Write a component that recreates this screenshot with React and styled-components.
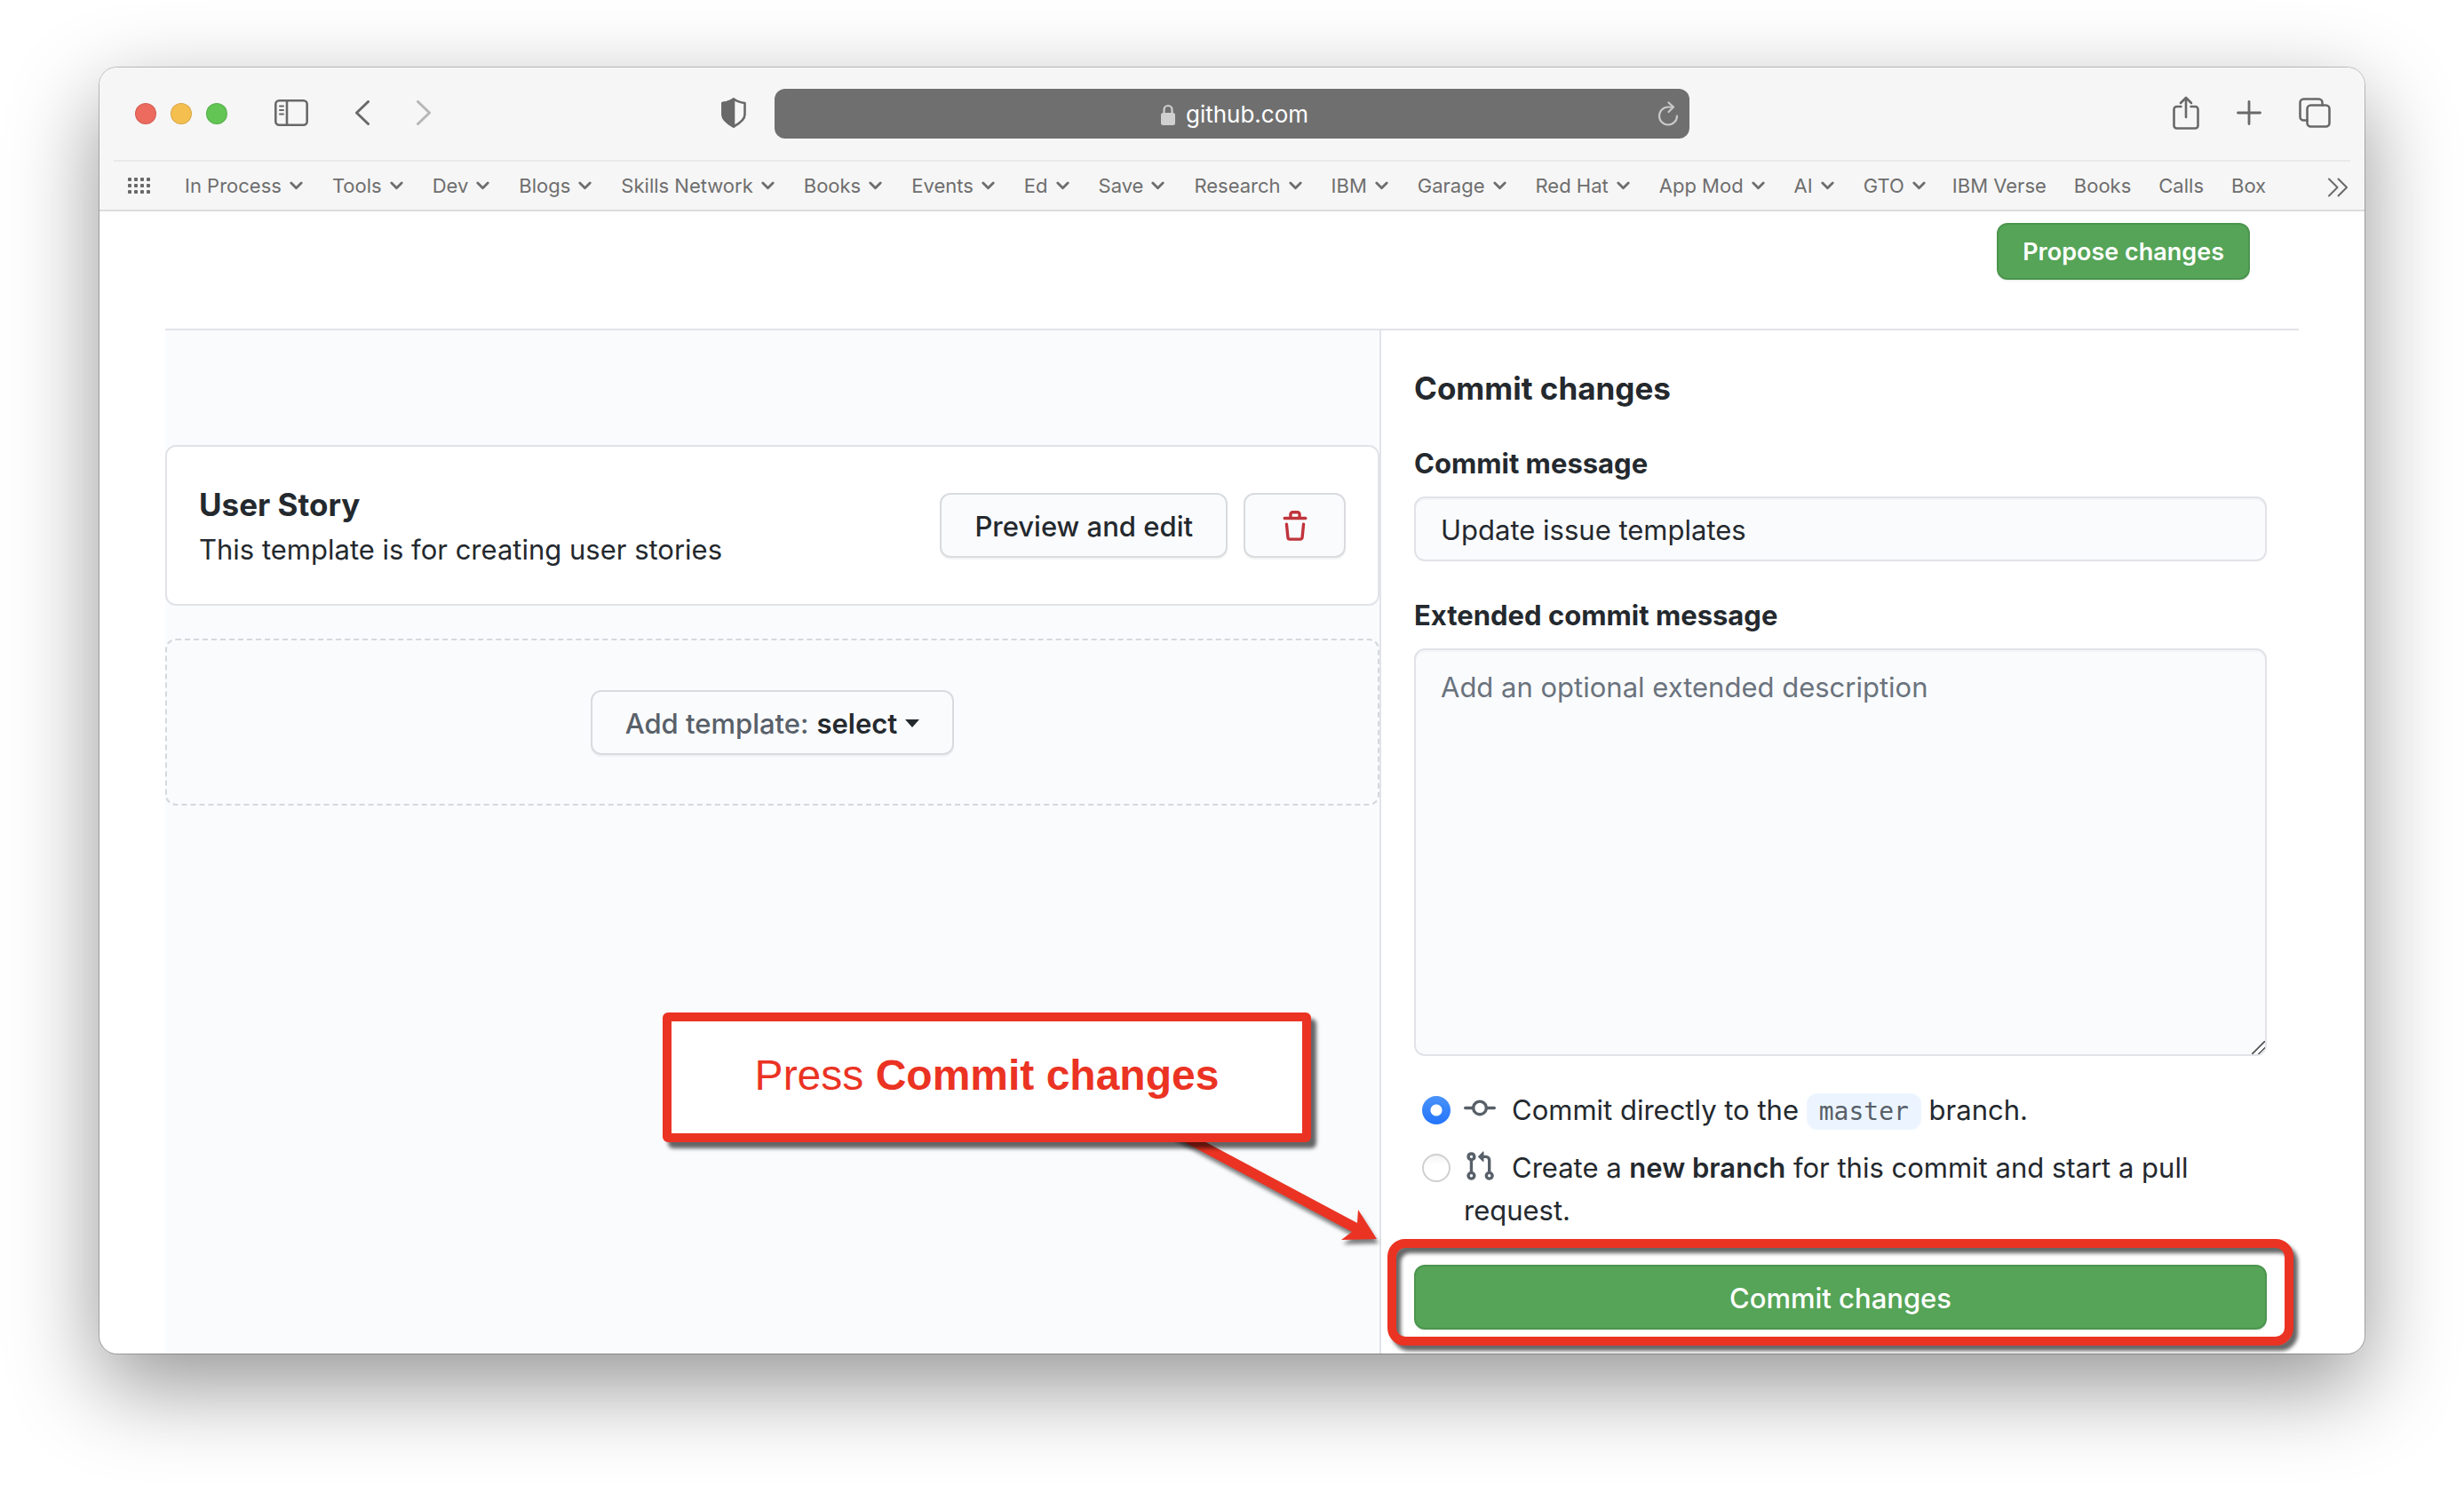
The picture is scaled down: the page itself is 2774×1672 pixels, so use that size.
import React from "react";
import styled, { createGlobalStyle, css } from "styled-components";

const INTER = `Inter, "Open Sans", "Liberation Sans", sans-serif`;

const color = {
  ink: "#24292e",
  inkSoft: "#586069",
  placeholder: "#6a737d",
  line: "#e2e3e8",
  panel: "#fafbfd",
  chrome: "#f6f6f6",
  chromeInk: "#696969",
  green: "#55a457",
  red: "#eb3323",
};

const GlobalStyle = createGlobalStyle`
  *, *::before, *::after { box-sizing: border-box; }
  body { margin: 0; background: #fff; font-family: ${INTER}; color: ${color.ink}; }
  button, input, textarea { font-family: inherit; color: inherit; margin: 0; }
  h2, h3, p { margin: 0; }
  svg { display: block; }
`;

const Desktop = styled.div`
  min-height: 100vh;
  padding: 76px 112px 148px;
  display: flex;
`;

const Window = styled.div`
  flex: 1;
  min-width: 0;
  display: flex;
  flex-direction: column;
  overflow: hidden;
  background: #fff;
  border-radius: 20px;
  box-shadow: 0 0 0 1px rgba(0, 0, 0, 0.22), 0 36px 100px rgba(0, 0, 0, 0.42);
`;

/* ---------- browser chrome ---------- */

const Chrome = styled.div`
  background: ${color.chrome};
  border-bottom: 2px solid #dcdcdc;
`;

const Toolbar = styled.header`
  display: grid;
  grid-template-columns: 1fr minmax(0, 1030px) 1fr;
  align-items: center;
  gap: 32px;
  margin: 0 16px;
  padding: 24px;
  border-bottom: 2px solid #e9e9e9;
`;

const ToolGroup = styled.div`
  display: flex;
  align-items: center;
  gap: ${(p) => p.$gap}px;
  justify-content: ${(p) => (p.$end ? "flex-end" : "flex-start")};
  margin-right: ${(p) => (p.$end ? "-2px" : "0")};
`;

const Lights = styled.div`
  display: flex;
  gap: 16px;
`;

const Light = styled.button`
  width: 24px;
  height: 24px;
  padding: 0;
  border-radius: 50%;
  border: 1px solid rgba(0, 0, 0, 0.12);
  background: ${(p) => p.$fill};
`;

const IconButton = styled.button`
  padding: 0;
  border: 0;
  background: none;
  color: ${(p) => p.$tint || color.chromeInk};
  opacity: ${(p) => (p.disabled ? 0.45 : 1)};
`;

const ToolButton = styled(IconButton)`
  padding-bottom: 2px;
  margin-left: ${(p) => (p.$push ? "auto" : "0")};
`;

const MoreButton = styled(IconButton)`
  margin-left: auto;
  padding-top: 4px;
`;

const AddressBar = styled.div`
  display: flex;
  align-items: center;
  height: 56px;
  padding: 0 12px;
  border-radius: 12px;
  background: #6f6f6f;
`;

const Address = styled.label`
  flex: 1;
  display: flex;
  align-items: center;
  justify-content: center;
  gap: 12px;
  padding: 2px 0 0 30px;
  color: #d0d0d0;
`;

const AddressInput = styled.input`
  field-sizing: content;
  padding: 0;
  border: 0;
  outline: 0;
  background: none;
  color: #fff;
  font-size: 26px;
  line-height: 32px;
`;

const Bookmarks = styled.nav`
  display: flex;
  align-items: center;
  gap: 30px;
  height: 54px;
  padding: 0 18px 0 32px;
  color: #6e6e6e;
`;

const BookmarkGroup = styled.div`
  display: flex;
  gap: ${(p) => p.$gap}px;
  margin-left: ${(p) => (p.$inset ? "8px" : "0")};
`;

const bookmarkText = css`
  display: flex;
  align-items: center;
  gap: 9px;
  padding: 0;
  border: 0;
  background: none;
  color: inherit;
  font-size: 22px;
  line-height: 28px;
  white-space: nowrap;
  text-decoration: none;
`;

const BookmarkFolder = styled.button`
  ${bookmarkText}
`;

const BookmarkLink = styled.a`
  ${bookmarkText}
`;

/* ---------- page ---------- */

const Page = styled.main`
  flex: 1;
  display: flex;
  flex-direction: column;
  padding: 0 74px;
`;

const ProposeRow = styled.div`
  display: flex;
  justify-content: flex-end;
  padding: 13px 55px 55px;
  border-bottom: 2px solid ${color.line};
`;

const Columns = styled.div`
  flex: 1;
  display: grid;
  grid-template-columns: minmax(0, 1367fr) minmax(0, 1035fr);
`;

const Button = styled.button`
  display: flex;
  align-items: center;
  justify-content: center;
  gap: 9px;
  height: 73px;
  padding: 2px 37px 0;
  border: 2px solid #d9dbde;
  border-radius: 12px;
  background: ${color.panel};
  box-shadow: 0 2px 0 rgba(27, 31, 35, 0.05);
  color: ${color.ink};
  font-size: 31px;
  font-weight: 500;
  white-space: nowrap;
`;

const PrimaryButton = styled(Button)`
  border-color: #4c954f;
  background: ${color.green};
  color: #fff;
`;

const ProposeButton = styled(PrimaryButton)`
  height: 64px;
  padding: 0 27px;
  font-size: 27px;
  font-weight: 600;
`;

const TrashButton = styled(Button)`
  width: 115px;
  color: #c0343c;
`;

const Templates = styled.section`
  position: relative;
  display: flex;
  flex-direction: column;
  gap: 37px;
  padding-top: 129px;
  background: ${color.panel};
`;

const TemplateCard = styled.article`
  display: flex;
  align-items: center;
  gap: 18px;
  height: 181px;
  padding: 0 36px;
  border: 2px solid ${color.line};
  border-radius: 12px;
  background: #fff;
`;

const TemplateInfo = styled.div`
  flex: 1;
  min-width: 0;
  display: grid;
  gap: 3px;
  padding-top: 3px;
`;

const Heading = styled.h2`
  font-size: 35px;
  font-weight: 650;
  line-height: 48px;
`;

const Description = styled.p`
  font-size: 31px;
  line-height: 48px;
`;

const AddTemplate = styled.div`
  display: flex;
  align-items: center;
  justify-content: center;
  height: 188px;
  border: 2px dashed #d5d8dc;
  border-radius: 12px;
`;

const Muted = styled.span`
  color: ${color.inkSoft};
`;

const Strong = styled.strong`
  font-weight: 600;
`;

const Caret = styled.span`
  border: 8px solid transparent;
  border-top: 9px solid ${color.ink};
  border-bottom: 0;
`;

const CommitForm = styled.form`
  display: flex;
  flex-direction: column;
  gap: 37px;
  padding: 41px 36px 27px 37px;
  border-left: 2px solid ${color.line};
`;

const Field = styled.div`
  display: flex;
  flex-direction: column;
  gap: 13px;
`;

const FieldLabel = styled.label`
  font-size: 31px;
  font-weight: 650;
  line-height: 48px;
`;

const fieldBox = css`
  width: 100%;
  border: 2px solid ${color.line};
  border-radius: 12px;
  outline: 0;
  background: ${color.panel};
  box-shadow: inset 0 2px 0 rgba(225, 228, 232, 0.3);
  font-size: 31px;
  &::placeholder {
    color: ${color.placeholder};
    opacity: 1;
  }
`;

const TextInput = styled.input`
  ${fieldBox}
  height: 73px;
  padding: 2px 28px 0;
`;

const TextArea = styled.textarea`
  ${fieldBox}
  display: block;
  height: 459px;
  padding: 18px 28px;
  line-height: 48px;
  resize: vertical;
  &::-webkit-resizer {
    background: linear-gradient(
      135deg,
      transparent 46%,
      #5f5f5f 47% 54%,
      transparent 55% 71%,
      #5f5f5f 72% 79%,
      transparent 80%
    );
  }
`;

const Choices = styled.div`
  display: flex;
  flex-direction: column;
  gap: 17px;
`;

const Choice = styled.label`
  display: flex;
  align-items: flex-start;
  gap: 15px;
  padding-left: 9px;
  font-size: 31px;
  line-height: 48px;
`;

const Radio = styled.input`
  appearance: none;
  flex: none;
  width: 32px;
  height: 32px;
  margin: 8px 0;
  border: 2px solid #cfcfcf;
  border-radius: 50%;
  background: linear-gradient(#f4f4f4, #fff 40%);
  &:checked {
    border: 0;
    background: radial-gradient(circle, #fff 6px, transparent 7px),
      linear-gradient(#4a93f9, #2374fb);
  }
`;

const ChoiceIcon = styled.svg`
  display: inline-block;
  vertical-align: -5px;
  margin-right: 18px;
  color: ${color.inkSoft};
`;

const BranchName = styled.code`
  padding: 4px 14px;
  border-radius: 12px;
  background: #ecf5ff;
  color: ${color.inkSoft};
  font-family: "DejaVu Sans Mono", "Liberation Mono", monospace;
  font-size: 28px;
  line-height: 32px;
`;

/* ---------- annotations drawn over the page ---------- */

const Highlighted = styled.div`
  position: relative;
  display: grid;
  &::after {
    content: "";
    position: absolute;
    inset: -29px -30px -18px;
    border: 10px solid ${color.red};
    border-radius: 20px;
    filter: drop-shadow(5px 6px 2px rgba(0, 0, 0, 0.6));
    pointer-events: none;
  }
`;

const Callout = styled.aside`
  position: absolute;
  right: 77px;
  bottom: 238px;
  width: 730px;
`;

const CalloutText = styled.p`
  position: relative;
  padding: 33px 0 37px;
  border: 10px solid ${color.red};
  border-radius: 6px;
  background: #fff;
  box-shadow: 6px 7px 4px rgba(0, 0, 0, 0.6);
  color: ${color.red};
  font-family: "Liberation Sans", Arial, sans-serif;
  font-size: 48px;
  line-height: 56px;
  text-align: center;
`;

const CalloutArrow = styled.svg`
  position: absolute;
  top: 126px;
  left: 564px;
  overflow: visible;
  filter: drop-shadow(2px 5px 2px rgba(0, 0, 0, 0.5));
`;

/* ---------- icons ---------- */

const stroke = {
  fill: "none",
  stroke: "currentColor",
  strokeLinecap: "round",
  strokeLinejoin: "round",
};

const SidebarIcon = () => (
  <svg width="38" height="30" viewBox="0 0 38 30" {...stroke} strokeWidth="2.6">
    <rect x="1.3" y="1.3" width="35.4" height="27.4" rx="4" />
    <path d="M14 1.5v27" />
    <path d="M6 7.5h4M6 12h4M6 16.5h4" strokeWidth="2" />
  </svg>
);

const ChevronIcon = ({ flip }) => (
  <svg width="16" height="28" viewBox="0 0 16 28" {...stroke} strokeWidth="3">
    <path d={flip ? "M1.5 1.5L14.5 14l-13 12.5" : "M14.5 1.5L1.5 14l13 12.5"} />
  </svg>
);

const ShieldIcon = () => (
  <svg width="28" height="34" viewBox="0 0 28 34" {...stroke} strokeWidth="2.6">
    <path d="M14 1.5C10 4.5 6 5.5 1.5 6v13c0 6 6 10 12.5 13.5C20.5 29 26.5 25 26.5 19V6C22 5.5 18 4.5 14 1.5z" />
    <path d="M14 1.5C10 4.5 6 5.5 1.5 6v13c0 6 6 10 12.5 13.5z" fill="currentColor" />
  </svg>
);

const LockIcon = () => (
  <svg width="16" height="24" viewBox="0 0 16 24">
    <path d="M3.5 11V6.5a4.5 4.5 0 019 0V11" fill="none" stroke="currentColor" strokeWidth="2.2" />
    <rect y="10" width="16" height="14" rx="2.5" fill="currentColor" />
  </svg>
);

const ReloadIcon = () => (
  <svg width="24" height="28" viewBox="0 0 24 28" {...stroke} strokeWidth="2.2">
    <path d="M17.5 6.5H12a10 10 0 1010 10" />
    <path d="M12.5 1.5l5.5 5-5.5 5.5" />
  </svg>
);

const ShareIcon = () => (
  <svg width="30" height="38" viewBox="0 0 30 38" {...stroke} strokeWidth="2.6">
    <path d="M9.5 12h-5a3 3 0 00-3 3v18.5a3 3 0 003 3h21a3 3 0 003-3V15a3 3 0 00-3-3h-5" />
    <path d="M15 24V2M9 8l6-6 6 6" />
  </svg>
);

const PlusIcon = () => (
  <svg width="28" height="28" viewBox="0 0 28 28" {...stroke} strokeWidth="2.8">
    <path d="M14 1.5v25M1.5 14h25" />
  </svg>
);

const TabsIcon = () => (
  <svg width="36" height="34" viewBox="0 0 36 34" {...stroke} strokeWidth="2.6">
    <rect x="9.5" y="8.5" width="25" height="24" rx="4" />
    <path d="M9.5 25.5h-4a4 4 0 01-4-4v-16a4 4 0 014-4h17a4 4 0 014 4v3" />
  </svg>
);

const GridIcon = () => (
  <svg width="26" height="18" viewBox="0 0 26 18" fill="currentColor">
    {[0, 7, 14].map((y) =>
      [0, 7, 14, 21].map((x) => <rect key={`${x}-${y}`} x={x} y={y} width="4" height="4" rx="1" />)
    )}
  </svg>
);

const SmallChevron = () => (
  <svg width="15" height="10" viewBox="0 0 15 10" {...stroke} strokeWidth="2.8">
    <path d="M1.8 2l5.7 5.8L13.2 2" />
  </svg>
);

const MoreIcon = () => (
  <svg width="24" height="22" viewBox="0 0 24 22" {...stroke} strokeWidth="2">
    <path d="M2 1.5l9.5 9.5L2 20.5M12.5 1.5L22 11l-9.5 9.5" />
  </svg>
);

const TrashIcon = () => (
  <svg width="36" height="36" viewBox="0 0 16 16" fill="currentColor" fillRule="evenodd">
    <path d="M6.5 1.75a.25.25 0 01.25-.25h2.5a.25.25 0 01.25.25V3h-3V1.75zm4.5 0V3h2.25a.75.75 0 010 1.5H2.75a.75.75 0 010-1.5H5V1.75C5 .784 5.784 0 6.75 0h2.5C10.216 0 11 .784 11 1.75zM4.496 6.675a.75.75 0 10-1.492.15l.66 6.6A1.75 1.75 0 005.405 15h5.19c.9 0 1.652-.681 1.741-1.576l.66-6.6a.75.75 0 00-1.492-.149l-.66 6.6a.25.25 0 01-.249.225h-5.19a.25.25 0 01-.249-.225l-.66-6.6z" />
  </svg>
);

const CommitIcon = () => (
  <ChoiceIcon width="36" height="36" viewBox="0 0 16 16" fill="currentColor" fillRule="evenodd" aria-hidden="true">
    <path d="M10.5 7.75a2.5 2.5 0 11-5 0 2.5 2.5 0 015 0zm1.43.75a4.002 4.002 0 01-7.86 0H.75a.75.75 0 110-1.5h3.32a4.001 4.001 0 017.86 0h3.32a.75.75 0 110 1.5h-3.32z" />
  </ChoiceIcon>
);

const PullRequestIcon = () => (
  <ChoiceIcon width="36" height="36" viewBox="0 0 16 16" fill="currentColor" fillRule="evenodd" aria-hidden="true">
    <path d="M7.177 3.073L9.573.677A.25.25 0 0110 .854v4.792a.25.25 0 01-.427.177L7.177 3.427a.25.25 0 010-.354zM3.75 2.5a.75.75 0 100 1.5.75.75 0 000-1.5zm-2.25.75a2.25 2.25 0 113 2.122v5.256a2.251 2.251 0 11-1.5 0V5.372A2.25 2.25 0 011.5 3.25zM11 2.5h-1V4h1a1 1 0 011 1v5.628a2.251 2.251 0 101.5 0V5A2.5 2.5 0 0011 2.5zm1 10.25a.75.75 0 111.5 0 .75.75 0 01-1.5 0zM3.75 12a.75.75 0 100 1.5.75.75 0 000-1.5z" />
  </ChoiceIcon>
);

/* ---------- data ---------- */

const folders = [
  "In Process", "Tools", "Dev", "Blogs", "Skills Network", "Books", "Events", "Ed",
  "Save", "Research", "IBM", "Garage", "Red Hat", "App Mod", "AI", "GTO",
];
const links = ["IBM Verse", "Books", "Calls", "Box"];

function BrowserChrome() {
  return (
    <Chrome>
      <Toolbar>
        <ToolGroup $gap={53}>
          <Lights>
            <Light $fill="#ed6a5e" aria-label="Close" />
            <Light $fill="#f5bf4f" aria-label="Minimize" />
            <Light $fill="#62c554" aria-label="Zoom" />
          </Lights>
          <ToolButton aria-label="Sidebar"><SidebarIcon /></ToolButton>
          <ToolButton aria-label="Back"><ChevronIcon /></ToolButton>
          <ToolButton aria-label="Forward" disabled><ChevronIcon flip /></ToolButton>
          <ToolButton aria-label="Privacy report" $push><ShieldIcon /></ToolButton>
        </ToolGroup>
        <AddressBar>
          <Address>
            <LockIcon />
            <AddressInput aria-label="Address" defaultValue="github.com" />
          </Address>
          <IconButton aria-label="Reload" $tint="#c8c8c8"><ReloadIcon /></IconButton>
        </AddressBar>
        <ToolGroup $gap={42} $end>
          <ToolButton aria-label="Share"><ShareIcon /></ToolButton>
          <ToolButton aria-label="New tab"><PlusIcon /></ToolButton>
          <ToolButton aria-label="Show tabs"><TabsIcon /></ToolButton>
        </ToolGroup>
      </Toolbar>
      <Bookmarks aria-label="Bookmarks">
        <IconButton aria-label="Favorites"><GridIcon /></IconButton>
        <BookmarkGroup $gap={33} $inset>
          {folders.map((name) => (
            <BookmarkFolder key={name} type="button">{name}<SmallChevron /></BookmarkFolder>
          ))}
        </BookmarkGroup>
        <BookmarkGroup $gap={31}>
          {links.map((name) => (
            <BookmarkLink key={name} href="#">{name}</BookmarkLink>
          ))}
        </BookmarkGroup>
        <MoreButton aria-label="More bookmarks"><MoreIcon /></MoreButton>
      </Bookmarks>
    </Chrome>
  );
}

function TemplateList() {
  return (
    <Templates>
      <TemplateCard>
        <TemplateInfo>
          <Heading as="h3">User Story</Heading>
          <Description>This template is for creating user stories</Description>
        </TemplateInfo>
        <Button type="button">Preview and edit</Button>
        <TrashButton type="button" aria-label="Delete template"><TrashIcon /></TrashButton>
      </TemplateCard>
      <AddTemplate>
        <Button type="button" aria-haspopup="menu">
          <Muted>Add template:</Muted>
          <Strong>select</Strong>
          <Caret />
        </Button>
      </AddTemplate>
      <Callout>
        <CalloutArrow width="240" height="130" viewBox="0 0 240 130" fill={color.red}>
          <path d="M-14 0H10L218 111L219 96L240 129L200 130L212 121z" />
        </CalloutArrow>
        <CalloutText>Press <b>Commit changes</b></CalloutText>
      </Callout>
    </Templates>
  );
}

function CommitPanel() {
  return (
    <CommitForm onSubmit={(e) => e.preventDefault()}>
      <Heading>Commit changes</Heading>
      <Field>
        <FieldLabel htmlFor="message">Commit message</FieldLabel>
        <TextInput id="message" type="text" defaultValue="Update issue templates" />
      </Field>
      <Field>
        <FieldLabel htmlFor="description">Extended commit message</FieldLabel>
        <TextArea id="description" placeholder="Add an optional extended description" />
      </Field>
      <Choices>
        <Choice>
          <Radio type="radio" name="target" defaultChecked />
          <span>
            <CommitIcon />Commit directly to the <BranchName>master</BranchName> branch.
          </span>
        </Choice>
        <Choice>
          <Radio type="radio" name="target" />
          <span>
            <PullRequestIcon />Create a <Strong>new branch</Strong> for this commit and start a pull
            request.
          </span>
        </Choice>
      </Choices>
      <Highlighted>
        <PrimaryButton type="submit">Commit changes</PrimaryButton>
      </Highlighted>
    </CommitForm>
  );
}

export default function App() {
  return (
    <>
      <GlobalStyle />
      <Desktop>
        <Window>
          <BrowserChrome />
          <Page>
            <ProposeRow>
              <ProposeButton type="button">Propose changes</ProposeButton>
            </ProposeRow>
            <Columns>
              <TemplateList />
              <CommitPanel />
            </Columns>
          </Page>
        </Window>
      </Desktop>
    </>
  );
}
